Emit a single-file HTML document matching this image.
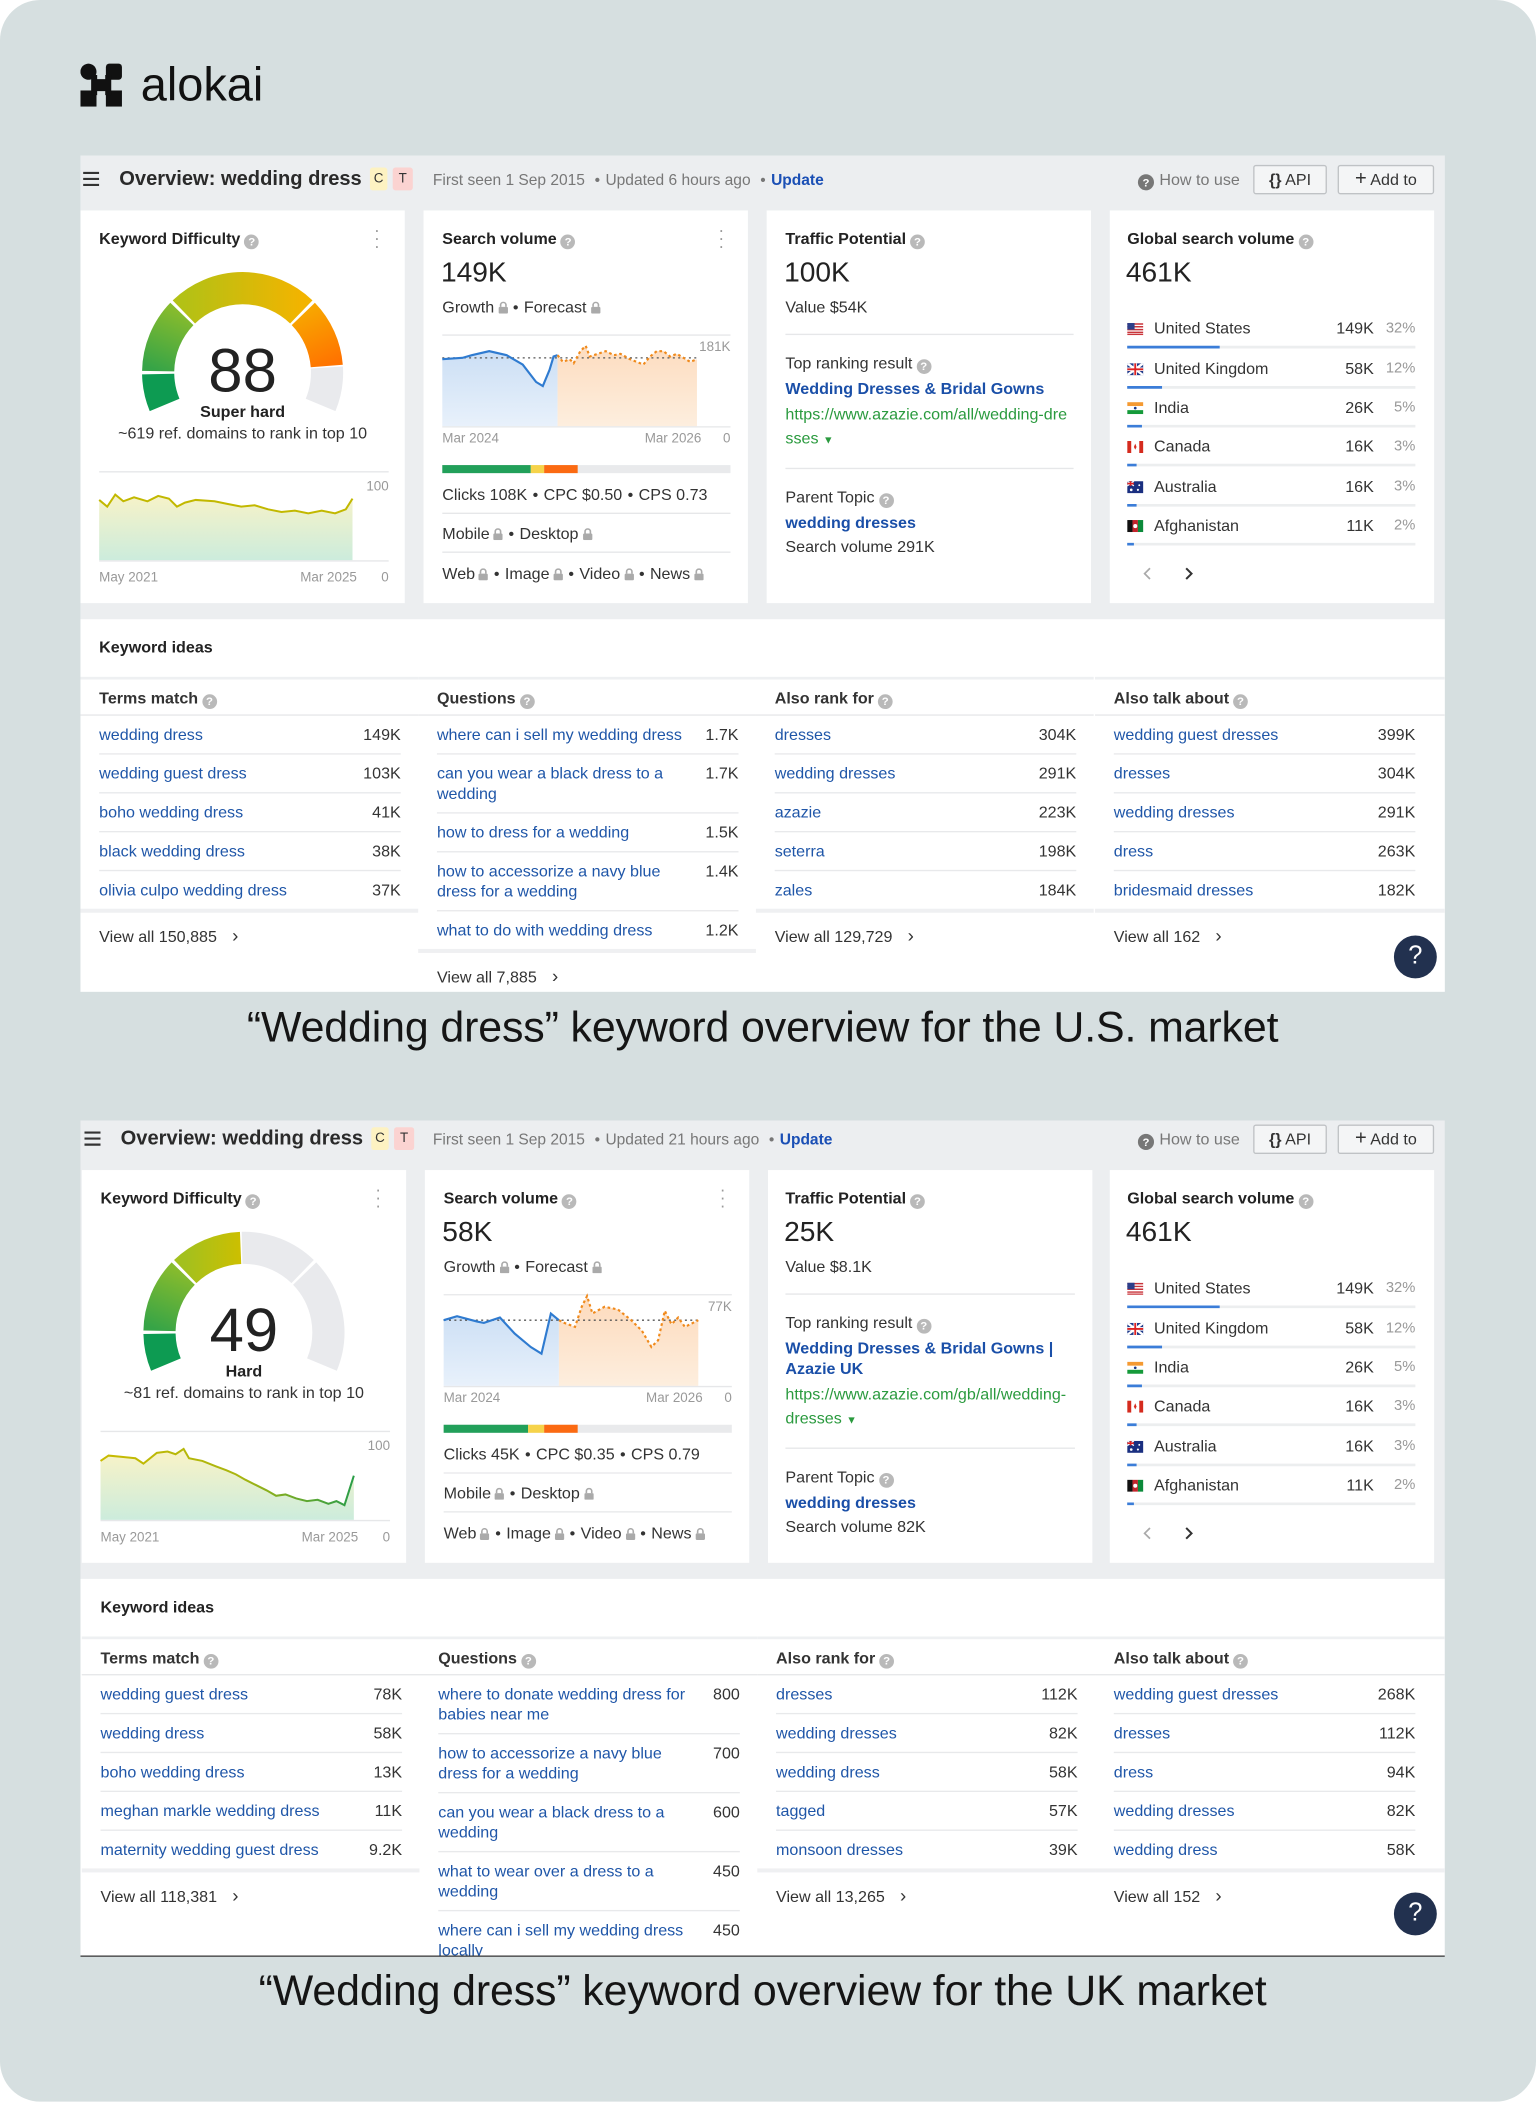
<!DOCTYPE html>
<html><head><meta charset="utf-8">
<style>
*{box-sizing:border-box;margin:0;padding:0}
html,body{width:1536px;height:2102px;overflow:hidden;background:#fff}
body{font-family:"Liberation Sans",Arial,sans-serif;color:#333}
#s{position:absolute;left:0;top:0;width:1146px;height:1568px;transform:scale(1.34031);transform-origin:0 0;background:#d6dfe0;border-radius:30px;overflow:hidden}
.a{position:absolute;white-space:nowrap}
.panel{position:absolute;left:60px;width:1018px;background:#eceef0;overflow:hidden}
.card{position:absolute;top:41px;width:242px;height:293px;background:#fff}
.t{position:absolute;white-space:nowrap;font-size:12px;line-height:16px;color:#333}
.ti{font-weight:bold;color:#222}
.big{font-size:21px;line-height:24px;color:#222}
.g{color:#999;font-size:10px}
.q{display:inline-block;width:11px;height:11px;border-radius:50%;background:#b9b9b9;color:#fff;font-size:8.5px;line-height:11px;text-align:center;font-weight:bold;vertical-align:-1px;margin-left:3px}
.lk{display:inline-block;width:7px;height:9px;vertical-align:-1px;margin-left:3px}
.hl{position:absolute;height:1px;background:#e6e7e9}
.dot{margin:0 4px}
.bl{color:#1a4fa8;font-weight:bold}
.gr{color:#2a9a3e}
.kw{position:absolute;top:346px;left:0;width:1018px;background:#fff}
.col{position:absolute;top:43px;width:252px}
.col .h{height:29px;line-height:29px;padding-left:14px;font-size:12px;font-weight:bold;color:#333;border-top:2px solid #eef0f2;border-bottom:1px solid #e6e7e9}
.col .l{margin:0 13px 0 14px}
.r{display:flex;justify-content:space-between;padding:7px 0 6px;line-height:15px;font-size:12px;border-bottom:1px solid #e8e9eb}
.r:last-child{border-bottom:none}
.r span:first-child{color:#1f56a8;max-width:188px}
.bar3{height:3px;background:#eff0f2}
.va{height:34px;line-height:34px;padding-left:14px;font-size:12px;color:#333}
.cap{position:absolute;left:60px;width:1018px;text-align:center;font-size:32px;color:#151515;letter-spacing:-0.1px}
.btn{position:absolute;top:7px;height:22px;border:1px solid #bfc2c5;border-radius:2px;background:#f4f5f6;font-size:12px;line-height:20px;color:#333;text-align:center}
.help{position:absolute;width:32px;height:32px;border-radius:50%;background:#22314f;color:#fff;font-size:19px;line-height:32px;text-align:center}
.meta{font-size:11.6px!important}
</style></head><body>
<div id="s">
<!-- logo -->
<svg class="a" style="left:60px;top:47px" width="31" height="33" viewBox="0 0 31 33">
<path d="M6 0.5 A6 6 0 1 1 5.99 0.5Z" fill="#111"/>
<rect x="19" y="0.5" width="12" height="12" rx="2.5" fill="#111"/>
<rect x="0" y="20.5" width="12" height="12" fill="#111"/>
<rect x="19" y="20.5" width="12" height="12" fill="#111"/>
<path d="M8 9 L23 9 L23 24 L8 24Z" fill="#111"/>
<path d="M12.5 8h6v4h-6zM12.5 21h6v4h-6z" fill="#d6dfe0"/>
</svg>
<div class="a" style="left:105px;top:42px;font-size:35px;line-height:44px;color:#111">alokai</div>

<!-- PANEL 1 -->
<div class="panel" style="top:116px;height:624px">
  <svg class="a" style="left:2px;top:12px" width="12" height="11"><path d="M0 1h12M0 5.5h12M0 10h12" stroke="#333" stroke-width="1.6"/></svg>
  <div class="a" style="left:29px;top:9px;font-size:15px;font-weight:bold;color:#2a2a2a;line-height:18px">Overview: wedding dress</div>
  <div class="a" style="left:216px;top:9px;width:13px;height:17px;background:#fdf2c2;font-size:10px;line-height:17px;text-align:center;border-radius:2px">C</div>
  <div class="a" style="left:233px;top:9px;width:15px;height:17px;background:#fbd3d1;font-size:10px;line-height:17px;text-align:center;border-radius:2px">T</div>
  <div class="a meta" style="left:263px;top:11px;font-size:12px;color:#777;line-height:16px">First seen 1 Sep 2015 <span class="dot">•</span>Updated 6 hours ago <span class="dot">•</span><b style="color:#1a4fb5">Update</b></div>
  <div class="a" style="left:789px;top:10px;font-size:12px;color:#777;line-height:16px"><span class="q" style="background:#777;margin:0 4px 0 0;width:12px;height:12px;line-height:12px">?</span>How to use</div>
  <div class="btn" style="left:875px;width:55px"><b>{}</b> API</div>
  <div class="btn" style="left:938px;width:72px"><span style="font-size:15px">+</span> Add to</div>

  <!-- KD card -->
  <div class="card" style="left:0">
    <div class="t ti" style="left:14px;top:13px">Keyword Difficulty<span class="q">?</span></div>
    <div class="t" style="left:219px;top:12px;color:#999;font-size:13px;line-height:6px;width:4px">·<br>·<br>·</div>
    <svg class="a" style="left:0;top:0" width="242" height="293">
      <defs>
        <linearGradient id="g2" x1="58" y1="120" x2="76" y2="77" gradientUnits="userSpaceOnUse"><stop offset="0" stop-color="#36a447"/><stop offset="1" stop-color="#86bb2d"/></linearGradient>
        <linearGradient id="g3" x1="77" y1="0" x2="165" y2="0" gradientUnits="userSpaceOnUse"><stop offset="0" stop-color="#b3c115"/><stop offset="1" stop-color="#f2b400"/></linearGradient>
        <linearGradient id="g4" x1="166" y1="77" x2="184" y2="116" gradientUnits="userSpaceOnUse"><stop offset="0" stop-color="#f8a500"/><stop offset="1" stop-color="#ff7300"/></linearGradient>
        <linearGradient id="ka" x1="0" y1="208" x2="0" y2="261" gradientUnits="userSpaceOnUse"><stop offset="0" stop-color="#fbf3c6"/><stop offset="1" stop-color="#ccecdc"/></linearGradient>
      </defs>
      <g fill="none" stroke-width="24">
        <path d="M62.8 145.1 A63 63 0 0 1 58 122.1" stroke="#0d9b52"/>
        <path d="M58 119.9 A63 63 0 0 1 75.7 77.2" stroke="url(#g2)"/>
        <path d="M77.2 75.7 A63 63 0 0 1 164.8 75.7" stroke="url(#g3)"/>
        <path d="M166.3 77.2 A63 63 0 0 1 183.8 116.1" stroke="url(#g4)"/>
        <path d="M183.9 117.2 A63 63 0 0 1 179.2 145.1" stroke="#e9eaed"/>
      </g>
      <path d="M14 216 L20 221 L26 212 L32 217 L40 214 L50 217 L58 213 L66 215 L72 221 L78 218 L86 216 L100 217 L110 219 L120 221 L130 220 L140 223 L150 225 L160 224 L170 226 L180 224 L190 226 L198 223 L203 215 L203 261 L14 261Z" fill="url(#ka)"/>
      <path d="M14 216 L20 221 L26 212 L32 217 L40 214 L50 217 L58 213 L66 215 L72 221 L78 218 L86 216 L100 217 L110 219 L120 221 L130 220 L140 223 L150 225 L160 224 L170 226 L180 224 L190 226 L198 223 L203 215" fill="none" stroke="#c2b800" stroke-width="1.5"/>
      <path d="M14 195H230M14 261.5H230" stroke="#e6e7e9"/>
    </svg>
    <div class="t" style="left:0;width:242px;text-align:center;top:95px;font-size:46px;line-height:48px;color:#222">88</div>
    <div class="t" style="left:0;width:242px;text-align:center;top:142px;font-weight:bold;color:#222">Super hard</div>
    <div class="t" style="left:0;width:242px;text-align:center;top:158px">~619 ref. domains to rank in top 10</div>
    <div class="t g" style="right:12px;top:199px">100</div>
    <div class="t g" style="left:14px;top:267px">May 2021</div>
    <div class="t g" style="left:164px;top:267px">Mar 2025</div>
    <div class="t g" style="right:12px;top:267px">0</div>
  </div>

  <!-- SV card -->
  <div class="card" style="left:256px">
    <div class="t ti" style="left:14px;top:13px">Search volume<span class="q">?</span></div>
    <div class="t" style="left:220px;top:12px;color:#999;font-size:13px;line-height:6px;width:4px">·<br>·<br>·</div>
    <div class="t big" style="left:13px;top:35px">149K</div>
    <div class="t" style="left:14px;top:64px">Growth<svg class="lk" viewBox="0 0 7 9"><path d="M1.5 4V2.6a2 2 0 0 1 4 0V4" fill="none" stroke="#aaa" stroke-width="1.2"/><rect y="4" width="7" height="5" rx="1" fill="#aaa"/></svg><span class="dot">•</span>Forecast<svg class="lk" viewBox="0 0 7 9"><path d="M1.5 4V2.6a2 2 0 0 1 4 0V4" fill="none" stroke="#aaa" stroke-width="1.2"/><rect y="4" width="7" height="5" rx="1" fill="#aaa"/></svg></div>
    <svg class="a" style="left:0;top:0" width="242" height="293">
      <defs>
        <linearGradient id="sb" x1="0" y1="100" x2="0" y2="161" gradientUnits="userSpaceOnUse"><stop offset="0" stop-color="#c9ddf4"/><stop offset="1" stop-color="#e8f1fb"/></linearGradient>
        <linearGradient id="so" x1="0" y1="100" x2="0" y2="161" gradientUnits="userSpaceOnUse"><stop offset="0" stop-color="#fddcbf"/><stop offset="1" stop-color="#fdeede"/></linearGradient>
      </defs>
      <path d="M14 93H229" stroke="#e6e7e9"/>
      <path d="M14 111 L29 110 L36 108 L49 105 L62 108 L74 115 L84 128 L89 131 L94 119 L97 109 L100 108 L100 161 L14 161Z" fill="url(#sb)"/>
      <path d="M100 108 L104 113 L109 111 L112 114 L117 105 L121 101 L124 109 L130 107 L136 105 L142 108 L147 107 L154 111 L159 113 L164 115 L169 109 L174 105 L179 105 L184 109 L189 107 L194 110 L199 113 L204 111 L204 161 L100 161Z" fill="url(#so)"/>
      <path d="M14 110H204" stroke="#555" stroke-width="1" stroke-dasharray="1.5 2.5"/>
      <path d="M14 111 L29 110 L36 108 L49 105 L62 108 L74 115 L84 128 L89 131 L94 119 L97 109 L100 108" fill="none" stroke="#2f7bd0" stroke-width="1.6"/>
      <path d="M100 108 L104 113 L109 111 L112 114 L117 105 L121 101 L124 109 L130 107 L136 105 L142 108 L147 107 L154 111 L159 113 L164 115 L169 109 L174 105 L179 105 L184 109 L189 107 L194 110 L199 113 L204 111" fill="none" stroke="#f08a1c" stroke-width="1.6" stroke-dasharray="2 2"/>
      <path d="M14 161.5H229" stroke="#e6e7e9"/>
      <rect x="14" y="190" width="215" height="6" fill="#e9eaec"/>
      <rect x="14" y="190" width="66" height="6" fill="#22a05a"/>
      <rect x="80" y="190" width="10" height="6" fill="#f6d34a"/>
      <rect x="90" y="190" width="25" height="6" fill="#fb6a12"/>
      <path d="M14 226H229M14 255H229" stroke="#e6e7e9"/>
    </svg>
    <div class="t g" style="right:13px;top:95px">181K</div>
    <div class="t g" style="left:14px;top:163px">Mar 2024</div>
    <div class="t g" style="left:165px;top:163px">Mar 2026</div>
    <div class="t g" style="right:13px;top:163px">0</div>
    <div class="t" style="left:14px;top:204px">Clicks 108K<span class="dot">•</span>CPC $0.50<span class="dot">•</span>CPS 0.73</div>
    <div class="t" style="left:14px;top:233px">Mobile<svg class="lk" viewBox="0 0 7 9"><path d="M1.5 4V2.6a2 2 0 0 1 4 0V4" fill="none" stroke="#aaa" stroke-width="1.2"/><rect y="4" width="7" height="5" rx="1" fill="#aaa"/></svg><span class="dot">•</span>Desktop<svg class="lk" viewBox="0 0 7 9"><path d="M1.5 4V2.6a2 2 0 0 1 4 0V4" fill="none" stroke="#aaa" stroke-width="1.2"/><rect y="4" width="7" height="5" rx="1" fill="#aaa"/></svg></div>
    <div class="t" style="left:14px;top:263px">Web<svg class="lk" viewBox="0 0 7 9"><path d="M1.5 4V2.6a2 2 0 0 1 4 0V4" fill="none" stroke="#aaa" stroke-width="1.2"/><rect y="4" width="7" height="5" rx="1" fill="#aaa"/></svg><span class="dot">•</span>Image<svg class="lk" viewBox="0 0 7 9"><path d="M1.5 4V2.6a2 2 0 0 1 4 0V4" fill="none" stroke="#aaa" stroke-width="1.2"/><rect y="4" width="7" height="5" rx="1" fill="#aaa"/></svg><span class="dot">•</span>Video<svg class="lk" viewBox="0 0 7 9"><path d="M1.5 4V2.6a2 2 0 0 1 4 0V4" fill="none" stroke="#aaa" stroke-width="1.2"/><rect y="4" width="7" height="5" rx="1" fill="#aaa"/></svg><span class="dot">•</span>News<svg class="lk" viewBox="0 0 7 9"><path d="M1.5 4V2.6a2 2 0 0 1 4 0V4" fill="none" stroke="#aaa" stroke-width="1.2"/><rect y="4" width="7" height="5" rx="1" fill="#aaa"/></svg></div>
  </div>

  <!-- TP card -->
  <div class="card" style="left:512px">
    <div class="t ti" style="left:14px;top:13px">Traffic Potential<span class="q">?</span></div>
    <div class="t big" style="left:13px;top:35px">100K</div>
    <div class="t" style="left:14px;top:64px">Value $54K</div>
    <div class="hl" style="left:14px;width:215px;top:92px"></div>
    <div class="t" style="left:14px;top:106px">Top ranking result<span class="q">?</span></div>
    <div class="t bl" style="left:14px;top:125px">Wedding Dresses &amp; Bridal Gowns</div>
    <div class="t gr" style="left:14px;top:144px">https://www.azazie.com/all/wedding-dre</div>
    <div class="t gr" style="left:14px;top:162px">sses <span style="font-size:8px">▼</span></div>
    <div class="hl" style="left:14px;width:215px;top:192px"></div>
    <div class="t" style="left:14px;top:206px">Parent Topic<span class="q">?</span></div>
    <div class="t bl" style="left:14px;top:225px">wedding dresses</div>
    <div class="t" style="left:14px;top:243px">Search volume 291K</div>
  </div>

  <!-- GSV card -->
  <div class="card" style="left:768px">
    <div class="t ti" style="left:13px;top:13px">Global search volume<span class="q">?</span></div>
    <div class="t big" style="left:12px;top:35px">461K</div>
    <svg class="a" style="left:13px;top:84px" width="12" height="9"><rect width="12" height="9" fill="#fff"/><path d="M0 .7h12M0 2.8h12M0 4.9h12M0 7h12M0 8.6h12" stroke="#c9343a" stroke-width="1.1"/><rect width="5.5" height="4.9" fill="#2c3f8a"/></svg>
    <svg class="a" style="left:13px;top:114px" width="12" height="9"><rect width="12" height="9" fill="#1f3a8a"/><path d="M0 0L12 9M12 0L0 9" stroke="#fff" stroke-width="1.8"/><path d="M6 0V9M0 4.5H12" stroke="#fff" stroke-width="2.6"/><path d="M6 0V9M0 4.5H12" stroke="#d22" stroke-width="1.4"/></svg>
    <svg class="a" style="left:13px;top:143px" width="12" height="9"><rect width="12" height="3" fill="#f49a32"/><rect y="3" width="12" height="3" fill="#fff"/><rect y="6" width="12" height="3" fill="#159a3a"/><circle cx="6" cy="4.5" r="1" fill="#1a3a8a"/></svg>
    <svg class="a" style="left:13px;top:172px" width="12" height="9"><rect width="12" height="9" fill="#fff"/><rect width="3" height="9" fill="#d52b1e"/><rect x="9" width="3" height="9" fill="#d52b1e"/><path d="M6 2l1 2.5-1 2-1-2z" fill="#d52b1e"/></svg>
    <svg class="a" style="left:13px;top:202px" width="12" height="9"><rect width="12" height="9" fill="#1a2f80"/><path d="M0 0L5 3.5M5 0L0 3.5" stroke="#fff" stroke-width="1"/><path d="M2.5 0V3.5M0 1.75H5" stroke="#d22" stroke-width="1.2"/><circle cx="9" cy="3" r=".7" fill="#fff"/><circle cx="8" cy="6.5" r=".8" fill="#fff"/><circle cx="3" cy="6.5" r="1" fill="#fff"/></svg>
    <svg class="a" style="left:13px;top:231px" width="12" height="9"><rect width="4" height="9" fill="#111"/><rect x="4" width="4" height="9" fill="#c3242b"/><rect x="8" width="4" height="9" fill="#0b8a3a"/><circle cx="6" cy="4.5" r="1.5" fill="#fff"/></svg>
    <div class="t" style="left:33px;top:80px">United States</div><div class="t" style="right:45px;top:80px">149K</div><div class="t g" style="right:14px;top:80px;font-size:11px">32%</div>
    <div class="t" style="left:33px;top:110px">United Kingdom</div><div class="t" style="right:45px;top:110px">58K</div><div class="t g" style="right:14px;top:110px;font-size:11px">12%</div>
    <div class="t" style="left:33px;top:139px">India</div><div class="t" style="right:45px;top:139px">26K</div><div class="t g" style="right:14px;top:139px;font-size:11px">5%</div>
    <div class="t" style="left:33px;top:168px">Canada</div><div class="t" style="right:45px;top:168px">16K</div><div class="t g" style="right:14px;top:168px;font-size:11px">3%</div>
    <div class="t" style="left:33px;top:198px">Australia</div><div class="t" style="right:45px;top:198px">16K</div><div class="t g" style="right:14px;top:198px;font-size:11px">3%</div>
    <div class="t" style="left:33px;top:227px">Afghanistan</div><div class="t" style="right:45px;top:227px">11K</div><div class="t g" style="right:14px;top:227px;font-size:11px">2%</div>
    <svg class="a" style="left:0;top:0" width="242" height="293">
      <g stroke-width="2"><path d="M13 102H228M13 132H228M13 161H228M13 190H228M13 220H228M13 249H228" stroke="#eceeef"/>
      <path d="M13 102h69M13 132h26M13 161h11M13 190h7M13 220h7M13 249h5" stroke="#3b7dd8"/></g>
      <path d="M30 267l-4 4 4 4" fill="none" stroke="#aaa" stroke-width="1.3"/>
      <path d="M57 267l4 4-4 4" fill="none" stroke="#333" stroke-width="1.5"/>
    </svg>
  </div>

  <!-- Keyword ideas -->
  <div class="kw" style="height:278px">
    <div class="t ti" style="left:14px;top:13px">Keyword ideas</div>
    <div class="col" style="left:0">
      <div class="h">Terms match<span class="q">?</span></div>
      <div class="l">
        <div class="r"><span>wedding dress</span><span>149K</span></div>
        <div class="r"><span>wedding guest dress</span><span>103K</span></div>
        <div class="r"><span>boho wedding dress</span><span>41K</span></div>
        <div class="r"><span>black wedding dress</span><span>38K</span></div>
        <div class="r"><span>olivia culpo wedding dress</span><span>37K</span></div>
      </div>
      <div class="bar3"></div>
      <div class="va">View all 150,885 <span style="margin-left:8px;font-size:14px">›</span></div>
    </div>
    <div class="col" style="left:252px">
      <div class="h">Questions<span class="q">?</span></div>
      <div class="l">
        <div class="r"><span>where can i sell my wedding dress</span><span>1.7K</span></div>
        <div class="r"><span>can you wear a black dress to a wedding</span><span>1.7K</span></div>
        <div class="r"><span>how to dress for a wedding</span><span>1.5K</span></div>
        <div class="r"><span>how to accessorize a navy blue dress for a wedding</span><span>1.4K</span></div>
        <div class="r"><span>what to do with wedding dress</span><span>1.2K</span></div>
      </div>
      <div class="bar3"></div>
      <div class="va">View all 7,885 <span style="margin-left:8px;font-size:14px">›</span></div>
    </div>
    <div class="col" style="left:504px">
      <div class="h">Also rank for<span class="q">?</span></div>
      <div class="l">
        <div class="r"><span>dresses</span><span>304K</span></div>
        <div class="r"><span>wedding dresses</span><span>291K</span></div>
        <div class="r"><span>azazie</span><span>223K</span></div>
        <div class="r"><span>seterra</span><span>198K</span></div>
        <div class="r"><span>zales</span><span>184K</span></div>
      </div>
      <div class="bar3"></div>
      <div class="va">View all 129,729 <span style="margin-left:8px;font-size:14px">›</span></div>
    </div>
    <div class="col" style="left:757px;width:261px">
      <div class="h">Also talk about<span class="q">?</span></div>
      <div class="l" style="margin-right:22px">
        <div class="r"><span>wedding guest dresses</span><span>399K</span></div>
        <div class="r"><span>dresses</span><span>304K</span></div>
        <div class="r"><span>wedding dresses</span><span>291K</span></div>
        <div class="r"><span>dress</span><span>263K</span></div>
        <div class="r"><span>bridesmaid dresses</span><span>182K</span></div>
      </div>
      <div class="bar3"></div>
      <div class="va">View all 162 <span style="margin-left:8px;font-size:14px">›</span></div>
    </div>
    <div class="help" style="left:980px;top:236px">?</div>
  </div>
</div>

<div class="cap" style="top:746px;line-height:40px">“Wedding dress” keyword overview for the U.S. market</div>

<!-- PANEL 2 -->
<div class="panel" style="top:832px;height:628px;clip-path:inset(4px 0 0 0);border-bottom:1.5px solid #333">
  <svg class="a" style="left:3px;top:12px" width="12" height="11"><path d="M0 1h12M0 5.5h12M0 10h12" stroke="#333" stroke-width="1.6"/></svg>
  <div class="a" style="left:30px;top:9px;font-size:15px;font-weight:bold;color:#2a2a2a;line-height:18px">Overview: wedding dress</div>
  <div class="a" style="left:217px;top:9px;width:13px;height:17px;background:#fdf2c2;font-size:10px;line-height:17px;text-align:center;border-radius:2px">C</div>
  <div class="a" style="left:234px;top:9px;width:15px;height:17px;background:#fbd3d1;font-size:10px;line-height:17px;text-align:center;border-radius:2px">T</div>
  <div class="a meta" style="left:263px;top:11px;font-size:12px;color:#777;line-height:16px">First seen 1 Sep 2015 <span class="dot">•</span>Updated 21 hours ago <span class="dot">•</span><b style="color:#1a4fb5">Update</b></div>
  <div class="a" style="left:789px;top:10px;font-size:12px;color:#777;line-height:16px"><span class="q" style="background:#777;margin:0 4px 0 0;width:12px;height:12px;line-height:12px">?</span>How to use</div>
  <div class="btn" style="left:875px;width:55px"><b>{}</b> API</div>
  <div class="btn" style="left:938px;width:72px"><span style="font-size:15px">+</span> Add to</div>

  <div class="card" style="left:1px">
    <div class="t ti" style="left:14px;top:13px">Keyword Difficulty<span class="q">?</span></div>
    <div class="t" style="left:219px;top:12px;color:#999;font-size:13px;line-height:6px;width:4px">·<br>·<br>·</div>
    <svg class="a" style="left:0;top:0" width="242" height="293">
      <defs>
        <linearGradient id="h3" x1="77" y1="0" x2="119" y2="0" gradientUnits="userSpaceOnUse"><stop offset="0" stop-color="#a3c01e"/><stop offset="1" stop-color="#cdbf00"/></linearGradient>
        <linearGradient id="ka2" x1="0" y1="208" x2="0" y2="261" gradientUnits="userSpaceOnUse"><stop offset="0" stop-color="#fbf3c6"/><stop offset="1" stop-color="#ccecdc"/></linearGradient>
        <linearGradient id="kl2" x1="14" y1="0" x2="203" y2="0" gradientUnits="userSpaceOnUse"><stop offset="0" stop-color="#c9bb00"/><stop offset=".55" stop-color="#a9b510"/><stop offset="1" stop-color="#2a9d48"/></linearGradient>
      </defs>
      <g fill="none" stroke-width="24">
        <path d="M62.8 145.1 A63 63 0 0 1 58 122.1" stroke="#0d9b52"/>
        <path d="M58 119.9 A63 63 0 0 1 75.7 77.2" stroke="url(#g2)"/>
        <path d="M77.2 75.7 A63 63 0 0 1 118.5 58.05" stroke="url(#h3)"/>
        <path d="M119.6 58 A63 63 0 0 1 164.8 75.7" stroke="#e9eaed"/>
        <path d="M166.3 77.2 A63 63 0 0 1 179.2 145.1" stroke="#e9eaed"/>
      </g>
      <path d="M14 217 L20 213 L30 214 L40 215 L46 219 L56 211 L64 210 L70 212 L76 208 L80 215 L90 217 L100 221 L108 224 L115 227 L122 231 L130 235 L138 239 L145 243 L152 242 L160 245 L168 247 L176 246 L184 249 L190 247 L196 250 L203 228 L203 261 L14 261Z" fill="url(#ka2)"/>
      <path d="M14 217 L20 213 L30 214 L40 215 L46 219 L56 211 L64 210 L70 212 L76 208 L80 215 L90 217 L100 221 L108 224 L115 227 L122 231 L130 235 L138 239 L145 243 L152 242 L160 245 L168 247 L176 246 L184 249 L190 247 L196 250 L203 228" fill="none" stroke="url(#kl2)" stroke-width="1.5"/>
      <path d="M14 195H230M14 261.5H230" stroke="#e6e7e9"/>
    </svg>
    <div class="t" style="left:0;width:242px;text-align:center;top:95px;font-size:46px;line-height:48px;color:#222">49</div>
    <div class="t" style="left:0;width:242px;text-align:center;top:142px;font-weight:bold;color:#222">Hard</div>
    <div class="t" style="left:0;width:242px;text-align:center;top:158px">~81 ref. domains to rank in top 10</div>
    <div class="t g" style="right:12px;top:199px">100</div>
    <div class="t g" style="left:14px;top:267px">May 2021</div>
    <div class="t g" style="left:164px;top:267px">Mar 2025</div>
    <div class="t g" style="right:12px;top:267px">0</div>
  </div>

  <div class="card" style="left:257px">
    <div class="t ti" style="left:14px;top:13px">Search volume<span class="q">?</span></div>
    <div class="t" style="left:220px;top:12px;color:#999;font-size:13px;line-height:6px;width:4px">·<br>·<br>·</div>
    <div class="t big" style="left:13px;top:35px">58K</div>
    <div class="t" style="left:14px;top:64px">Growth<svg class="lk" viewBox="0 0 7 9"><path d="M1.5 4V2.6a2 2 0 0 1 4 0V4" fill="none" stroke="#aaa" stroke-width="1.2"/><rect y="4" width="7" height="5" rx="1" fill="#aaa"/></svg><span class="dot">•</span>Forecast<svg class="lk" viewBox="0 0 7 9"><path d="M1.5 4V2.6a2 2 0 0 1 4 0V4" fill="none" stroke="#aaa" stroke-width="1.2"/><rect y="4" width="7" height="5" rx="1" fill="#aaa"/></svg></div>
    <svg class="a" style="left:0;top:0" width="242" height="293">
      <path d="M14 93H229" stroke="#e6e7e9"/>
      <path d="M14 112 L24 109 L39 113 L44 114 L56 110 L67 122 L79 132 L87 137 L94 107 L100 112 L100 161 L14 161Z" fill="url(#sb)"/>
      <path d="M100 112 L104 114 L112 117 L117 102 L121 94 L125 107 L134 102 L144 104 L154 112 L162 120 L169 132 L174 127 L179 105 L184 115 L189 110 L194 117 L204 112 L204 161 L100 161Z" fill="url(#so)"/>
      <path d="M14 112H204" stroke="#555" stroke-width="1" stroke-dasharray="1.5 2.5"/>
      <path d="M14 112 L24 109 L39 113 L44 114 L56 110 L67 122 L79 132 L87 137 L94 107 L100 112" fill="none" stroke="#2f7bd0" stroke-width="1.6"/>
      <path d="M100 112 L104 114 L112 117 L117 102 L121 94 L125 107 L134 102 L144 104 L154 112 L162 120 L169 132 L174 127 L179 105 L184 115 L189 110 L194 117 L204 112" fill="none" stroke="#f08a1c" stroke-width="1.6" stroke-dasharray="2 2"/>
      <path d="M14 161.5H229" stroke="#e6e7e9"/>
      <rect x="14" y="190" width="215" height="6" fill="#e9eaec"/>
      <rect x="14" y="190" width="63" height="6" fill="#22a05a"/>
      <rect x="77" y="190" width="12" height="6" fill="#f6d34a"/>
      <rect x="89" y="190" width="25" height="6" fill="#fb6a12"/>
      <path d="M14 226H229M14 255H229" stroke="#e6e7e9"/>
    </svg>
    <div class="t g" style="right:13px;top:95px">77K</div>
    <div class="t g" style="left:14px;top:163px">Mar 2024</div>
    <div class="t g" style="left:165px;top:163px">Mar 2026</div>
    <div class="t g" style="right:13px;top:163px">0</div>
    <div class="t" style="left:14px;top:204px">Clicks 45K<span class="dot">•</span>CPC $0.35<span class="dot">•</span>CPS 0.79</div>
    <div class="t" style="left:14px;top:233px">Mobile<svg class="lk" viewBox="0 0 7 9"><path d="M1.5 4V2.6a2 2 0 0 1 4 0V4" fill="none" stroke="#aaa" stroke-width="1.2"/><rect y="4" width="7" height="5" rx="1" fill="#aaa"/></svg><span class="dot">•</span>Desktop<svg class="lk" viewBox="0 0 7 9"><path d="M1.5 4V2.6a2 2 0 0 1 4 0V4" fill="none" stroke="#aaa" stroke-width="1.2"/><rect y="4" width="7" height="5" rx="1" fill="#aaa"/></svg></div>
    <div class="t" style="left:14px;top:263px">Web<svg class="lk" viewBox="0 0 7 9"><path d="M1.5 4V2.6a2 2 0 0 1 4 0V4" fill="none" stroke="#aaa" stroke-width="1.2"/><rect y="4" width="7" height="5" rx="1" fill="#aaa"/></svg><span class="dot">•</span>Image<svg class="lk" viewBox="0 0 7 9"><path d="M1.5 4V2.6a2 2 0 0 1 4 0V4" fill="none" stroke="#aaa" stroke-width="1.2"/><rect y="4" width="7" height="5" rx="1" fill="#aaa"/></svg><span class="dot">•</span>Video<svg class="lk" viewBox="0 0 7 9"><path d="M1.5 4V2.6a2 2 0 0 1 4 0V4" fill="none" stroke="#aaa" stroke-width="1.2"/><rect y="4" width="7" height="5" rx="1" fill="#aaa"/></svg><span class="dot">•</span>News<svg class="lk" viewBox="0 0 7 9"><path d="M1.5 4V2.6a2 2 0 0 1 4 0V4" fill="none" stroke="#aaa" stroke-width="1.2"/><rect y="4" width="7" height="5" rx="1" fill="#aaa"/></svg></div>
  </div>

  <div class="card" style="left:513px">
    <div class="t ti" style="left:13px;top:13px">Traffic Potential<span class="q">?</span></div>
    <div class="t big" style="left:12px;top:35px">25K</div>
    <div class="t" style="left:13px;top:64px">Value $8.1K</div>
    <div class="hl" style="left:13px;width:216px;top:92px"></div>
    <div class="t" style="left:13px;top:106px">Top ranking result<span class="q">?</span></div>
    <div class="t bl" style="left:13px;top:125px">Wedding Dresses &amp; Bridal Gowns |</div>
    <div class="t bl" style="left:13px;top:140px">Azazie UK</div>
    <div class="t gr" style="left:13px;top:159px">https://www.azazie.com/gb/all/wedding-</div>
    <div class="t gr" style="left:13px;top:177px">dresses <span style="font-size:8px">▼</span></div>
    <div class="hl" style="left:13px;width:216px;top:207px"></div>
    <div class="t" style="left:13px;top:221px">Parent Topic<span class="q">?</span></div>
    <div class="t bl" style="left:13px;top:240px">wedding dresses</div>
    <div class="t" style="left:13px;top:258px">Search volume 82K</div>
  </div>

  <div class="card" style="left:768px">
    <div class="t ti" style="left:13px;top:13px">Global search volume<span class="q">?</span></div>
    <div class="t big" style="left:12px;top:35px">461K</div>
    <svg class="a" style="left:13px;top:84px" width="12" height="9"><rect width="12" height="9" fill="#fff"/><path d="M0 .7h12M0 2.8h12M0 4.9h12M0 7h12M0 8.6h12" stroke="#c9343a" stroke-width="1.1"/><rect width="5.5" height="4.9" fill="#2c3f8a"/></svg>
    <svg class="a" style="left:13px;top:114px" width="12" height="9"><rect width="12" height="9" fill="#1f3a8a"/><path d="M0 0L12 9M12 0L0 9" stroke="#fff" stroke-width="1.8"/><path d="M6 0V9M0 4.5H12" stroke="#fff" stroke-width="2.6"/><path d="M6 0V9M0 4.5H12" stroke="#d22" stroke-width="1.4"/></svg>
    <svg class="a" style="left:13px;top:143px" width="12" height="9"><rect width="12" height="3" fill="#f49a32"/><rect y="3" width="12" height="3" fill="#fff"/><rect y="6" width="12" height="3" fill="#159a3a"/><circle cx="6" cy="4.5" r="1" fill="#1a3a8a"/></svg>
    <svg class="a" style="left:13px;top:172px" width="12" height="9"><rect width="12" height="9" fill="#fff"/><rect width="3" height="9" fill="#d52b1e"/><rect x="9" width="3" height="9" fill="#d52b1e"/><path d="M6 2l1 2.5-1 2-1-2z" fill="#d52b1e"/></svg>
    <svg class="a" style="left:13px;top:202px" width="12" height="9"><rect width="12" height="9" fill="#1a2f80"/><path d="M0 0L5 3.5M5 0L0 3.5" stroke="#fff" stroke-width="1"/><path d="M2.5 0V3.5M0 1.75H5" stroke="#d22" stroke-width="1.2"/><circle cx="9" cy="3" r=".7" fill="#fff"/><circle cx="8" cy="6.5" r=".8" fill="#fff"/><circle cx="3" cy="6.5" r="1" fill="#fff"/></svg>
    <svg class="a" style="left:13px;top:231px" width="12" height="9"><rect width="4" height="9" fill="#111"/><rect x="4" width="4" height="9" fill="#c3242b"/><rect x="8" width="4" height="9" fill="#0b8a3a"/><circle cx="6" cy="4.5" r="1.5" fill="#fff"/></svg>
    <div class="t" style="left:33px;top:80px">United States</div><div class="t" style="right:45px;top:80px">149K</div><div class="t g" style="right:14px;top:80px;font-size:11px">32%</div>
    <div class="t" style="left:33px;top:110px">United Kingdom</div><div class="t" style="right:45px;top:110px">58K</div><div class="t g" style="right:14px;top:110px;font-size:11px">12%</div>
    <div class="t" style="left:33px;top:139px">India</div><div class="t" style="right:45px;top:139px">26K</div><div class="t g" style="right:14px;top:139px;font-size:11px">5%</div>
    <div class="t" style="left:33px;top:168px">Canada</div><div class="t" style="right:45px;top:168px">16K</div><div class="t g" style="right:14px;top:168px;font-size:11px">3%</div>
    <div class="t" style="left:33px;top:198px">Australia</div><div class="t" style="right:45px;top:198px">16K</div><div class="t g" style="right:14px;top:198px;font-size:11px">3%</div>
    <div class="t" style="left:33px;top:227px">Afghanistan</div><div class="t" style="right:45px;top:227px">11K</div><div class="t g" style="right:14px;top:227px;font-size:11px">2%</div>
    <svg class="a" style="left:0;top:0" width="242" height="293">
      <g stroke-width="2"><path d="M13 102H228M13 132H228M13 161H228M13 190H228M13 220H228M13 249H228" stroke="#eceeef"/>
      <path d="M13 102h69M13 132h26M13 161h11M13 190h7M13 220h7M13 249h5" stroke="#3b7dd8"/></g>
      <path d="M30 267l-4 4 4 4" fill="none" stroke="#aaa" stroke-width="1.3"/>
      <path d="M57 267l4 4-4 4" fill="none" stroke="#333" stroke-width="1.5"/>
    </svg>
  </div>

  <div class="kw" style="height:282px">
    <div class="t ti" style="left:15px;top:13px">Keyword ideas</div>
    <div class="col" style="left:1px">
      <div class="h">Terms match<span class="q">?</span></div>
      <div class="l">
        <div class="r"><span>wedding guest dress</span><span>78K</span></div>
        <div class="r"><span>wedding dress</span><span>58K</span></div>
        <div class="r"><span>boho wedding dress</span><span>13K</span></div>
        <div class="r"><span>meghan markle wedding dress</span><span>11K</span></div>
        <div class="r"><span>maternity wedding guest dress</span><span>9.2K</span></div>
      </div>
      <div class="bar3"></div>
      <div class="va">View all 118,381 <span style="margin-left:8px;font-size:14px">›</span></div>
    </div>
    <div class="col" style="left:253px">
      <div class="h">Questions<span class="q">?</span></div>
      <div class="l">
        <div class="r"><span>where to donate wedding dress for babies near me</span><span>800</span></div>
        <div class="r"><span>how to accessorize a navy blue dress for a wedding</span><span>700</span></div>
        <div class="r"><span>can you wear a black dress to a wedding</span><span>600</span></div>
        <div class="r"><span>what to wear over a dress to a wedding</span><span>450</span></div>
        <div class="r"><span>where can i sell my wedding dress locally</span><span>450</span></div>
      </div>
    </div>
    <div class="col" style="left:505px">
      <div class="h">Also rank for<span class="q">?</span></div>
      <div class="l">
        <div class="r"><span>dresses</span><span>112K</span></div>
        <div class="r"><span>wedding dresses</span><span>82K</span></div>
        <div class="r"><span>wedding dress</span><span>58K</span></div>
        <div class="r"><span>tagged</span><span>57K</span></div>
        <div class="r"><span>monsoon dresses</span><span>39K</span></div>
      </div>
      <div class="bar3"></div>
      <div class="va">View all 13,265 <span style="margin-left:8px;font-size:14px">›</span></div>
    </div>
    <div class="col" style="left:757px;width:261px">
      <div class="h">Also talk about<span class="q">?</span></div>
      <div class="l" style="margin-right:22px">
        <div class="r"><span>wedding guest dresses</span><span>268K</span></div>
        <div class="r"><span>dresses</span><span>112K</span></div>
        <div class="r"><span>dress</span><span>94K</span></div>
        <div class="r"><span>wedding dresses</span><span>82K</span></div>
        <div class="r"><span>wedding dress</span><span>58K</span></div>
      </div>
      <div class="bar3"></div>
      <div class="va">View all 152 <span style="margin-left:8px;font-size:14px">›</span></div>
    </div>
    <div class="help" style="left:980px;top:234px">?</div>
  </div>
</div>

<div class="cap" style="top:1465px;line-height:40px">“Wedding dress” keyword overview for the UK market</div>
</div>
</body></html>
